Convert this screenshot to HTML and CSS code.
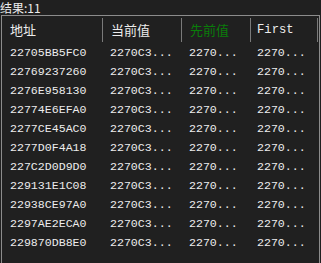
FILE: index.html
```html
<!DOCTYPE html>
<html>
<head>
<meta charset="utf-8">
<link rel="stylesheet" href="styles.css">
</head>
<body>
<div class="label">结果:11</div>
<div class="list">
  <div class="header">
    <div class="hcell">地址</div>
    <div class="hcell">当前值</div>
    <div class="hcell green">先前值</div>
    <div class="hcell mono">First</div>
  </div>
  <div class="rows">
    <div class="row"><span>22705BB5FC0</span><span>2270C3...</span><span>2270...</span><span>2270...</span></div>
    <div class="row"><span>22769237260</span><span>2270C3...</span><span>2270...</span><span>2270...</span></div>
    <div class="row"><span>2276E958130</span><span>2270C3...</span><span>2270...</span><span>2270...</span></div>
    <div class="row"><span>22774E6EFA0</span><span>2270C3...</span><span>2270...</span><span>2270...</span></div>
    <div class="row"><span>2277CE45AC0</span><span>2270C3...</span><span>2270...</span><span>2270...</span></div>
    <div class="row"><span>2277D0F4A18</span><span>2270C3...</span><span>2270...</span><span>2270...</span></div>
    <div class="row"><span>227C2D0D9D0</span><span>2270C3...</span><span>2270...</span><span>2270...</span></div>
    <div class="row"><span>229131E1C08</span><span>2270C3...</span><span>2270...</span><span>2270...</span></div>
    <div class="row"><span>22938CE97A0</span><span>2270C3...</span><span>2270...</span><span>2270...</span></div>
    <div class="row"><span>2297AE2ECA0</span><span>2270C3...</span><span>2270...</span><span>2270...</span></div>
    <div class="row"><span>229870DB8E0</span><span>2270C3...</span><span>2270...</span><span>2270...</span></div>
  </div>
</div>
</body>
</html>
```
FILE: styles.css
```css
html, body {
  margin: 0;
  padding: 0;
  background: #202020;
  overflow: hidden;
}
body {
  width: 321px;
  height: 263px;
  color: #ececec;
  font-family: "Noto Sans CJK SC", sans-serif;
}
.label {
  height: 15px;
  font-size: 12px;
  line-height: 15px;
  white-space: nowrap;
}
.list {
  margin-left: 1px;
  width: 317px;
  height: 260px;
  border: 1px solid #8c8c8c;
  border-bottom: none;
}
.header {
  display: grid;
  grid-template-columns: 101px 79px 69px 67px;
  height: 27px;
}
.hcell {
  display: flex;
  align-items: center;
  padding-left: 8px;
  font-size: 13px;
  position: relative;
  white-space: nowrap;
}
.hcell::after {
  content: "";
  position: absolute;
  right: 0;
  top: 2px;
  bottom: 1px;
  width: 1px;
  background: #7a7a7a;
}
.green { color: #0a7d0a; }
.mono {
  font-family: "Liberation Mono", monospace;
  font-size: 12.2px;
  padding-left: 6px;
}
.rows {
  display: flex;
  flex-direction: column;
}
.row {
  display: grid;
  grid-template-columns: 101px 79px 69px 67px;
  height: 19px;
  align-items: center;
  font-family: "Liberation Mono", monospace;
  font-size: 11.6px;
  white-space: nowrap;
}
.row span {
  padding-left: 8px;
  overflow: hidden;
}
.row span:nth-child(2) { padding-left: 7px; }
.row span:nth-child(3) { padding-left: 7px; }
.row span:nth-child(4) { padding-left: 6px; }
```
